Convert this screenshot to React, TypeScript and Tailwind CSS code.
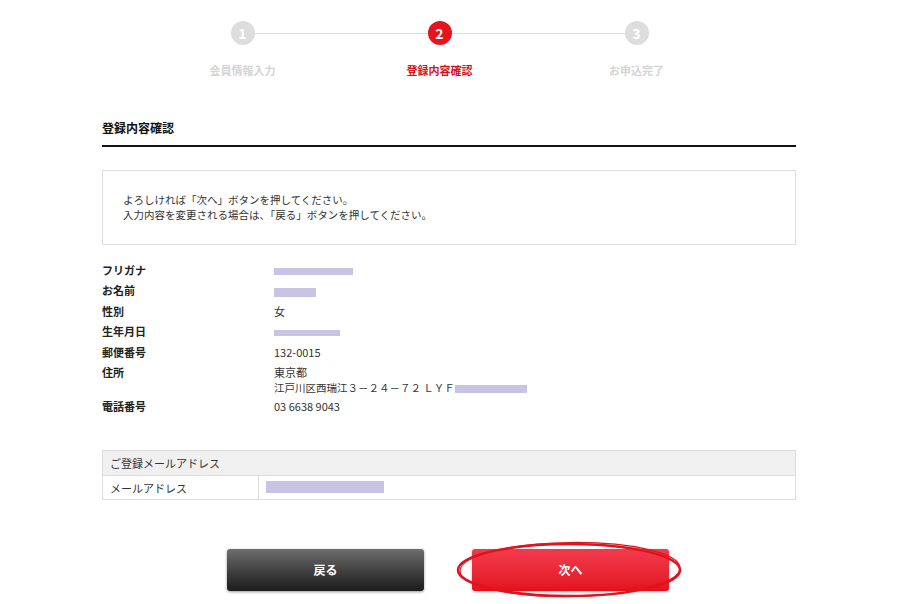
import React from 'react';

const font = { fontFamily: '"Noto Sans CJK JP", "Liberation Sans", sans-serif' };

const steps = [
  { n: 1, label: '会員情報入力', active: false },
  { n: 2, label: '登録内容確認', active: true },
  { n: 3, label: 'お申込完了', active: false },
];

const Redact: React.FC<{ w: string; h?: string }> = ({ w, h = 'h-[8px]' }) => (
  <span className={`inline-block ${w} ${h} bg-[#c9c3e5] align-middle`} />
);

const Row: React.FC<{ label: string; children: React.ReactNode }> = ({ label, children }) => (
  <div className="flex text-[11px] leading-[20.5px]">
    <div className="w-[172px] font-bold text-[#222]">{label}</div>
    <div className="text-[#333]">{children}</div>
  </div>
);

export default function App() {
  return (
    <div className="w-[900px] h-[604px] bg-white overflow-hidden" style={font}>
      {/* stepper */}
      <div className="relative ml-[144px] w-[591px] pt-[21px]">
        <div className="absolute left-[99px] right-[99px] top-[33px] h-px bg-[#dcdcdc]" />
        <div className="relative grid grid-cols-3">
          {steps.map((s) => (
            <div key={s.n} className="flex flex-col items-center">
              <div
                className={`flex h-[24px] w-[24px] items-center justify-center rounded-full text-[14px] font-bold text-white ${
                  s.active ? 'bg-[#e5141f]' : 'bg-[#dddddd]'
                }`}
              >
                {s.n}
              </div>
              <div
                className={`mt-[17px] text-[11px] font-bold ${s.active ? 'text-[#d7111c]' : 'text-[#d4d4d4]'}`}
              >
                {s.label}
              </div>
            </div>
          ))}
        </div>
      </div>

      <div className="ml-[102px] w-[694px] pt-[40px]">
        <h2 className="text-[12px] font-bold text-[#111] pb-[8px] border-b-2 border-[#111]">登録内容確認</h2>

        <div className="mt-[23px] h-[75px] border border-[#dddddd] pl-[20px] pt-[21px] text-[10.5px] leading-[15px] text-[#333]">
          <p>よろしければ「次へ」ボタンを押してください。</p>
          <p>入力内容を変更される場合は、「戻る」ボタンを押してください。</p>
        </div>

        <div className="mt-[15px]">
          <Row label="フリガナ"><Redact w="w-[79px]" h="h-[7px]" /></Row>
          <Row label="お名前"><Redact w="w-[42px]" h="h-[9px]" /></Row>
          <Row label="性別">女</Row>
          <Row label="生年月日"><Redact w="w-[66px]" h="h-[6px]" /></Row>
          <Row label="郵便番号">132-0015</Row>
          <Row label="住所">
            <div className="leading-[15px] pt-[3px] pb-[1px]">
              <div>東京都</div>
              <div className="text-[10.5px]">
                江戸川区西瑞江３－２４－７２ ＬＹＦ<Redact w="w-[72px]" h="h-[8px]" />
              </div>
            </div>
          </Row>
          <Row label="電話番号">03 6638 9043</Row>
        </div>

        <div className="mt-[33px] border border-[#dddddd] text-[11px] text-[#333]">
          <div className="h-[24px] bg-[#f0f0f0] pl-[7px] leading-[24px]">ご登録メールアドレス</div>
          <div className="flex h-[24px] border-t border-[#dddddd]">
            <div className="w-[156px] border-r border-[#dddddd] pl-[7px] leading-[24px]">メールアドレス</div>
            <div className="flex items-center pl-[7px]">
              <Redact w="w-[118px]" h="h-[12px]" />
            </div>
          </div>
        </div>
      </div>

      {/* buttons */}
      <div className="mt-[49px] ml-[227px] flex gap-[48px]">
        <button className="h-[42px] w-[197px] rounded-[3px] bg-gradient-to-b from-[#6e6e6e] to-[#1c1c1c] text-[12px] font-bold text-white shadow-[0_1px_3px_rgba(0,0,0,0.4)]">
          戻る
        </button>
        <div className="relative">
          <button className="h-[42px] w-[197px] rounded-[3px] bg-gradient-to-b from-[#f23a4c] to-[#e3101d] text-[12px] font-bold text-white shadow-[0_1px_3px_rgba(0,0,0,0.25)]">
            次へ
          </button>
          <svg className="absolute left-[-16px] top-[-8px]" width="228" height="58" viewBox="0 0 228 58">
            <ellipse cx="113" cy="29" rx="111" ry="26" fill="none" stroke="#e0141e" strokeWidth="2.5" />
            <ellipse cx="114" cy="28.5" rx="110" ry="27" fill="none" stroke="#e0141e" strokeWidth="1.2" transform="rotate(-0.8 114 29)" />
          </svg>
        </div>
      </div>
    </div>
  );
}
